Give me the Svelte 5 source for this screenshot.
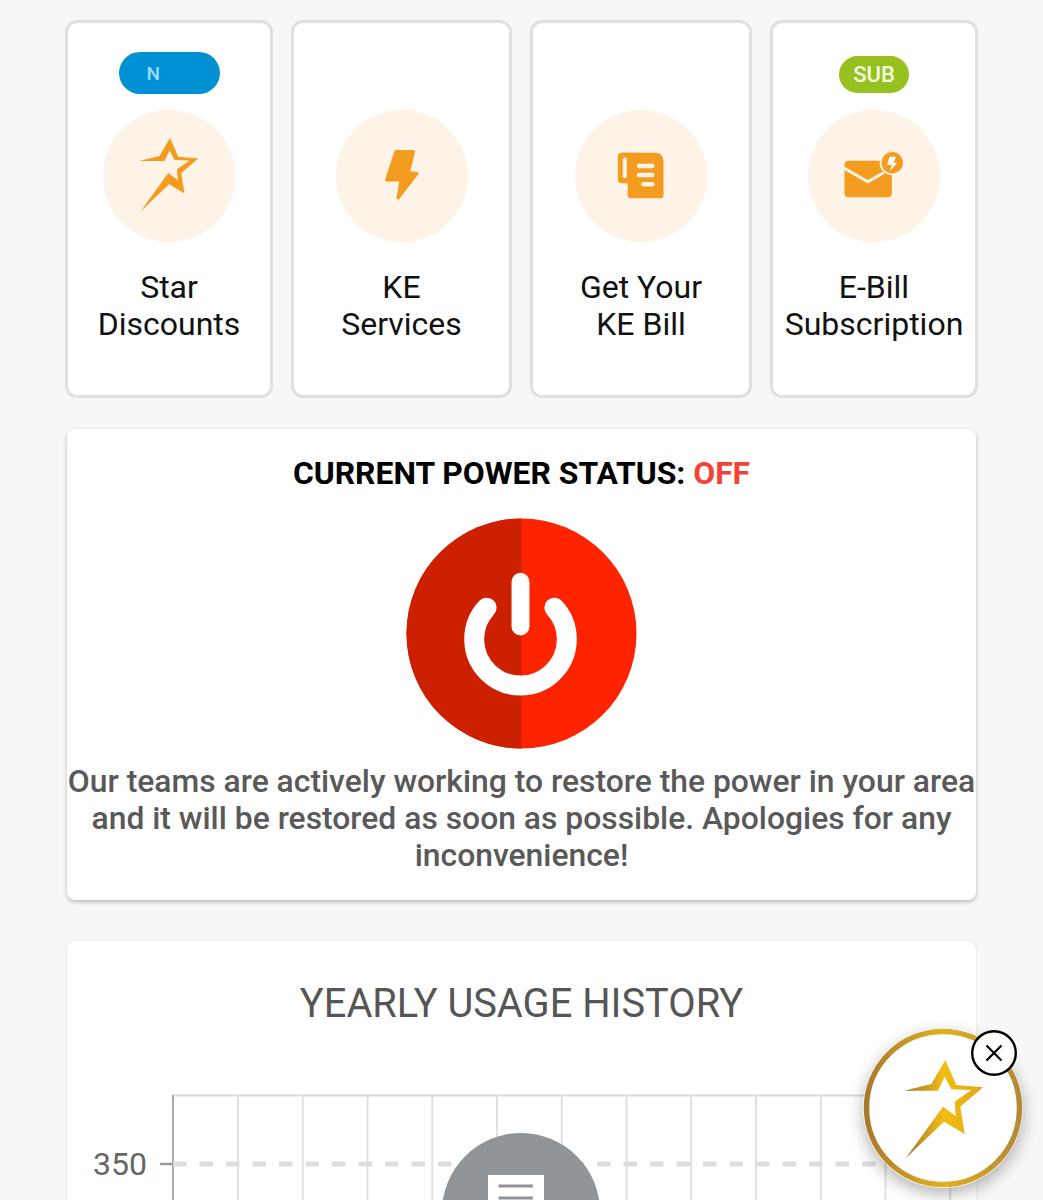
<script>
	const tiles = [
		{ id: 'star', lines: ['Star', 'Discounts'], badge: 'N', badgeClass: 'badge-new' },
		{ id: 'bolt', lines: ['KE', 'Services'] },
		{ id: 'bill', lines: ['Get Your', 'KE Bill'] },
		{ id: 'mail', lines: ['E-Bill', 'Subscription'], badge: 'SUB', badgeClass: 'badge-sub' }
	];

	const starPoints =
		'193,242 275,222 317,150 350,225 430,232 362,290 375,372 313,335 198,445 310,290 348,318 345,275 395,240 335,238 315,200 295,242';

	// grid columns of the chart, in page pixels
	const gridLines = Array.from({ length: 12 }, (_, i) => 238 + i * 64.75);
</script>

<div class="page">
	<div class="tiles">
		{#each tiles as tile}
			<div class="tile">
				<div class="badge-slot">
					{#if tile.badge}
						<span class="badge {tile.badgeClass}">{tile.badge}</span>
					{/if}
				</div>
				<div class="icon-circle">
					<svg viewBox="0 0 132 132" width="132" height="132">
						{#if tile.id === 'star'}
							<polygon
								transform="translate(36 28) scale(.25) translate(-193 -150)"
								points={starPoints}
								fill="#f39c1f"
							/>
						{:else if tile.id === 'bolt'}
							<polygon
								points="60,41.5 77.5,41.5 72.5,62.5 81,63.5 62,88 65,70 50.5,70"
								fill="#f39c1f"
								stroke="#f39c1f"
								stroke-width="3"
								stroke-linejoin="round"
							/>
						{:else if tile.id === 'bill'}
							<rect x="42.8" y="42.7" width="20" height="30.6" rx="4" fill="#f39c1f" />
							<path
								d="M47 42.7H80Q88.5 42.7 88.5 52V85a3.3 3.3 0 0 1-3.3 3.3H56a3.3 3.3 0 0 1-3.3-3.3V60H47Z"
								fill="#f39c1f"
							/>
							<rect x="47.8" y="47.3" width="4" height="21" rx="2" fill="#fdf3e6" />
							<rect x="61.8" y="53.8" width="17.7" height="4.4" rx="2.2" fill="#fdf3e6" />
							<rect x="61.8" y="62.8" width="17.7" height="4.4" rx="2.2" fill="#fdf3e6" />
							<rect x="66.2" y="72.1" width="13.3" height="4.4" rx="2.2" fill="#fdf3e6" />
						{:else if tile.id === 'mail'}
							<rect x="36.5" y="50.7" width="47.3" height="36.6" rx="4" fill="#f39c1f" />
							<polyline
								points="35,57.5 59.8,71.7 76,62.5"
								fill="none"
								stroke="#fdf3e6"
								stroke-width="3"
							/>
							<circle cx="84.2" cy="52.7" r="12.6" fill="#fdf3e6" />
							<circle cx="84.2" cy="52.7" r="10.7" fill="#f39c1f" />
							<polygon
								points="81.5,46.7 88.2,46.7 85.5,52.7 89.2,52.7 82.2,60.7 83.8,55 79.2,55"
								fill="#fff"
							/>
						{/if}
					</svg>
				</div>
				<div class="tile-label">
					{#each tile.lines as line}
						<div>{line}</div>
					{/each}
				</div>
			</div>
		{/each}
	</div>

	<section class="card status-card">
		<h2 class="status-title">CURRENT POWER STATUS: <span class="off">OFF</span></h2>
		<svg class="power" viewBox="0 0 232 232" width="231" height="231">
			<circle cx="116" cy="116" r="115.5" fill="#ff2400" />
			<path d="M116 .5A115.5 115.5 0 0 0 116 231.5Z" fill="#cc2000" />
			<path
				d="M81 90A46.5 46.5 0 1 0 149 90"
				fill="none"
				stroke="#fff"
				stroke-width="20"
				stroke-linecap="round"
			/>
			<line x1="115" y1="64" x2="115" y2="109" stroke="#fff" stroke-width="18" stroke-linecap="round" />
		</svg>
		<p class="status-text">
			Our teams are actively working to restore the power in your area and it will be restored as
			soon as possible. Apologies for any inconvenience!
		</p>
	</section>

	<section class="card chart-card">
		<h2 class="chart-title">YEARLY USAGE HISTORY</h2>
		<svg class="chart" viewBox="67 1085 909 120" width="909" height="120">
			<line x1="173" y1="1095.5" x2="950" y2="1095.5" stroke="#d8d8d8" stroke-width="2" />
			{#each gridLines as x}
				<line x1={x} y1="1095" x2={x} y2="1205" stroke="#e0e0e0" stroke-width="2" />
			{/each}
			<line x1="173" y1="1095" x2="173" y2="1205" stroke="#aaa" stroke-width="2" />
			<line x1="160" y1="1164" x2="173" y2="1164" stroke="#999" stroke-width="2.5" />
			<line x1="173" y1="1164" x2="950" y2="1164" stroke="#ddd" stroke-width="5" stroke-dasharray="13.5 13" />
			<text x="93" y="1175" class="tick-label">350</text>
			<circle cx="521" cy="1212" r="79" fill="#90959a" />
			<rect x="488" y="1175" width="56" height="40" fill="#fff" />
			<line x1="498.5" y1="1186" x2="533" y2="1186" stroke="#90959a" stroke-width="3" />
			<line x1="498.5" y1="1198" x2="533" y2="1198" stroke="#90959a" stroke-width="3" />
		</svg>
	</section>

	<div class="floater">
		<svg viewBox="0 0 160 160" width="160" height="160">
			<defs>
				<linearGradient id="ring" x1="0" y1="0" x2="1" y2="0">
					<stop offset="0" stop-color="#a97a2c" />
					<stop offset=".5" stop-color="#e2b11f" />
					<stop offset="1" stop-color="#b58a35" />
				</linearGradient>
				<linearGradient id="gold" gradientUnits="userSpaceOnUse" x1="193" y1="300" x2="430" y2="300">
					<stop offset="0" stop-color="#a0722c" />
					<stop offset=".5" stop-color="#f2bd12" />
					<stop offset="1" stop-color="#e0a818" />
				</linearGradient>
			</defs>
			<circle cx="80" cy="80" r="76.5" fill="#fff" stroke="url(#ring)" stroke-width="5.5" />
			<polygon
				transform="translate(41 32) scale(.3333) translate(-193 -150)"
				points={starPoints}
				fill="url(#gold)"
			/>
		</svg>
		<button class="close" aria-label="Close">
			<svg viewBox="0 0 46 46" width="46" height="46">
				<defs>
					<filter id="rough" x="-10%" y="-10%" width="120%" height="120%">
						<feTurbulence type="fractalNoise" baseFrequency=".35" numOctaves="1" seed="4" />
						<feDisplacementMap in="SourceGraphic" scale="1.6" />
					</filter>
				</defs>
				<circle cx="23" cy="23" r="22" fill="#fff" />
				<circle cx="23" cy="23" r="21.8" fill="none" stroke="#000" stroke-width="2.4" filter="url(#rough)" />
				<path d="M15.5 15.5L30.5 30.5M30.5 15.5L15.5 30.5" stroke="#000" stroke-width="2.2" />
			</svg>
		</button>
	</div>
</div>

<style>
	:global(body) {
		background: #f7f7f7;
	}

	.page {
		height: 1200px;
		overflow: hidden;
		box-sizing: border-box;
		padding: 20px 65px 0;
		background: #f7f7f7;
		font-family: Roboto, 'Liberation Sans', sans-serif;
	}

	.tiles {
		display: grid;
		grid-template-columns: 208px 221px 222px 208px;
		gap: 18px;
		margin-bottom: 31px;
	}

	.tile {
		box-sizing: border-box;
		height: 378px;
		background: #fff;
		border: 3px solid #e0e0e0;
		border-radius: 12px;
		display: flex;
		flex-direction: column;
		align-items: center;
		padding-top: 29px;
	}

	.badge-slot {
		height: 42px;
		margin-bottom: 16px;
		display: flex;
		align-items: flex-end;
		justify-content: center;
	}

	.badge {
		box-sizing: border-box;
		display: flex;
		align-items: center;
		border-radius: 21px;
		font-weight: 500;
	}

	.badge-new {
		width: 101px;
		height: 42px;
		padding-left: 28px;
		background: #0090d4;
		color: #9fdcff;
		font-size: 19px;
	}

	.badge-sub {
		height: 37px;
		margin-bottom: 1px;
		padding: 0 14px;
		background: #96c11f;
		color: #f4fbe2;
		font-size: 22px;
	}

	.icon-circle {
		width: 132px;
		height: 132px;
		border-radius: 50%;
		background: #fdf3e6;
		margin-bottom: 27px;
	}

	.icon-circle svg {
		display: block;
	}

	.tile-label {
		text-align: center;
		font-size: 32px;
		line-height: 37px;
		color: #111;
	}

	.card {
		width: 909px;
		margin: 0 2px;
		background: #fff;
		border-radius: 8px;
		box-shadow: 0 2px 4px rgba(0, 0, 0, 0.25);
	}

	.status-card {
		box-sizing: border-box;
		height: 471px;
		padding-top: 26px;
		margin-bottom: 41px;
		text-align: center;
	}

	.status-title {
		margin: 0 0 26px;
		font-size: 31.85px;
		line-height: 37px;
		font-weight: 700;
		color: #000;
	}

	.off {
		color: #f44336;
	}

	.power {
		display: block;
		margin: 0 auto 14px;
	}

	.status-text {
		margin: 0 -2px;
		font-size: 31.85px;
		line-height: 37px;
		font-weight: 500;
		color: #595959;
	}

	.chart-card {
		height: 300px;
		padding-top: 41px;
		box-shadow: 0 0 2px rgba(0, 0, 0, 0.12);
	}

	.chart-title {
		margin: 0 0 59px;
		text-align: center;
		font-size: 39.8px;
		line-height: 44px;
		font-weight: 400;
		color: #555;
	}

	.chart {
		display: block;
	}

	.tick-label {
		font-size: 32px;
		fill: #666;
		font-family: Roboto, sans-serif;
		font-weight: 400;
	}

	.floater {
		position: fixed;
		right: 20px;
		bottom: 12px;
		width: 160px;
		height: 160px;
		border-radius: 50%;
		box-shadow: 0 6px 16px rgba(0, 0, 0, 0.3);
	}

	.floater > svg {
		display: block;
	}

	.close {
		position: absolute;
		left: 108px;
		top: 2px;
		width: 46px;
		height: 46px;
		padding: 0;
		border: 0;
		background: none;
	}

	.close svg {
		display: block;
	}
</style>
